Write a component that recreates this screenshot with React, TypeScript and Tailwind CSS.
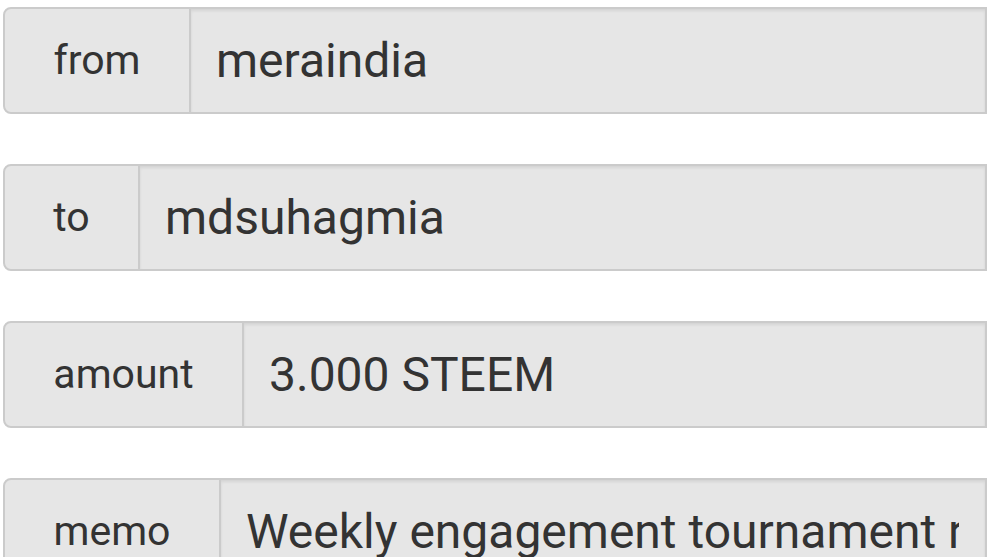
const rows = [
  { label: "from", value: "meraindia", w: "w-[186px]" },
  { label: "to", value: "mdsuhagmia", w: "w-[135px]" },
  { label: "amount", value: "3.000 STEEM", w: "w-[239px]" },
  { label: "memo", value: "Weekly engagement tournament reward", w: "w-[216px]" },
]

export default function App() {
  return (
    <div className="h-[557px] w-[1004px] overflow-hidden bg-white font-['Roboto',sans-serif] text-[#333]">
      <div className="flex flex-col gap-[50px] pl-[3px] pt-[7px]">
        {rows.map((row) => (
          <div
            key={row.label}
            className="flex h-[107px] w-[984px] overflow-hidden rounded-l-[8px] border-2 border-[#cbcbcb] bg-[#e6e6e6]"
          >
            <div
              className={`${row.w} flex shrink-0 items-center justify-center border-r-2 border-[#cbcbcb] text-[41px]`}
            >
              {row.label}
            </div>
            <div className="flex min-w-0 flex-1 items-center pl-[25px] pr-[26px] text-[48px] shadow-[inset_0_2px_3px_rgba(0,0,0,0.08)]">
              <div className="min-w-0 overflow-hidden whitespace-nowrap">{row.value}</div>
            </div>
          </div>
        ))}
      </div>
    </div>
  )
}
